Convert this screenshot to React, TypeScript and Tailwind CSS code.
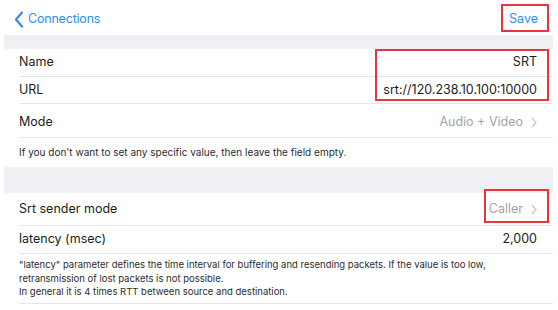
import React from "react";

const font = { fontFamily: "Inter, 'Liberation Sans', sans-serif" };

function Chevron({ className = "" }: { className?: string }) {
  return (
    <svg width="6" height="11" viewBox="0 0 6 11" className={className}>
      <path d="M1 1l4 4.5L1 10" fill="none" stroke="#c4c4c9" strokeWidth="1.2" />
    </svg>
  );
}

function Row({
  label,
  value,
  muted,
  chevron,
  h,
  last,
}: {
  label: string;
  value: string;
  muted?: boolean;
  chevron?: boolean;
  h: string;
  last?: boolean;
}) {
  return (
    <div className={`ml-[15px] flex items-center justify-between pr-[16px] ${h} ${last ? "" : "border-b border-[#e6e6ea]"}`}>
      <span className="text-[12.5px] text-[#1c1c1e]">{label}</span>
      <span className={`flex items-center gap-[8px] text-[12.5px] ${muted ? "text-[#a3a3a8]" : "text-[#1c1c1e]"}`}>
        {value}
        {chevron && <Chevron />}
      </span>
    </div>
  );
}

export default function App() {
  return (
    <div className="relative h-[310px] w-[558px] overflow-hidden bg-white pl-[4px] pr-[5px]" style={font}>
      {/* nav bar */}
      <div className="flex h-[35px] items-center justify-between pr-[15px] pt-[3px]">
        <div className="flex items-center gap-[4px] pl-[10px] text-[#2f8ef2]">
          <svg width="10" height="17" viewBox="0 0 10 17">
            <path d="M8 1.5L2 8.5l6 7" fill="none" stroke="#2f8ef2" strokeWidth="2.2" strokeLinecap="round" strokeLinejoin="round" />
          </svg>
          <span className="text-[12.5px] tracking-[-0.2px]">Connections</span>
        </div>
        <span className="text-[12.5px] text-[#2f8ef2]">Save</span>
      </div>

      <div className="h-[14px] bg-[#efeff4]" />

      <Row label="Name" value="SRT" h="h-[28px]" />
      <Row label="URL" value="srt://120.238.10.100:10000" h="h-[27px]" />
      <Row label="Mode" value="Audio + Video" muted chevron h="h-[34px] pt-[3px]" />
      <div className="h-[29px] pl-[15px] pt-[7px] text-[10px] text-[#2c2c2e]">
        If you don't want to set any specific value, then leave the field empty.
      </div>

      <div className="h-[26px] bg-[#efeff4]" />

      <Row label="Srt sender mode" value="Caller" muted chevron h="h-[33px]" />
      <Row label="latency (msec)" value="2,000" h="h-[28px]" />
      <div className="ml-[15px] h-[50px] border-b border-[#e6e6ea] pt-[4px] text-[9.5px] leading-[13.5px] text-[#2c2c2e]">
        "latency" parameter defines the time interval for buffering and resending packets. If the value is too low,
        <br />
        retransmission of lost packets is not possible.
        <br />
        In general it is 4 times RTT between source and destination.
      </div>

      {/* annotation boxes */}
      <div className="absolute left-[501px] top-[4px] h-[28px] w-[48px] border-2 border-[#e8363d]" />
      <div className="absolute left-[375px] top-[49px] h-[52px] w-[174px] border-2 border-[#e8363d]" />
      <div className="absolute left-[484px] top-[189px] h-[34px] w-[65px] border-2 border-[#e8363d]" />
    </div>
  );
}
